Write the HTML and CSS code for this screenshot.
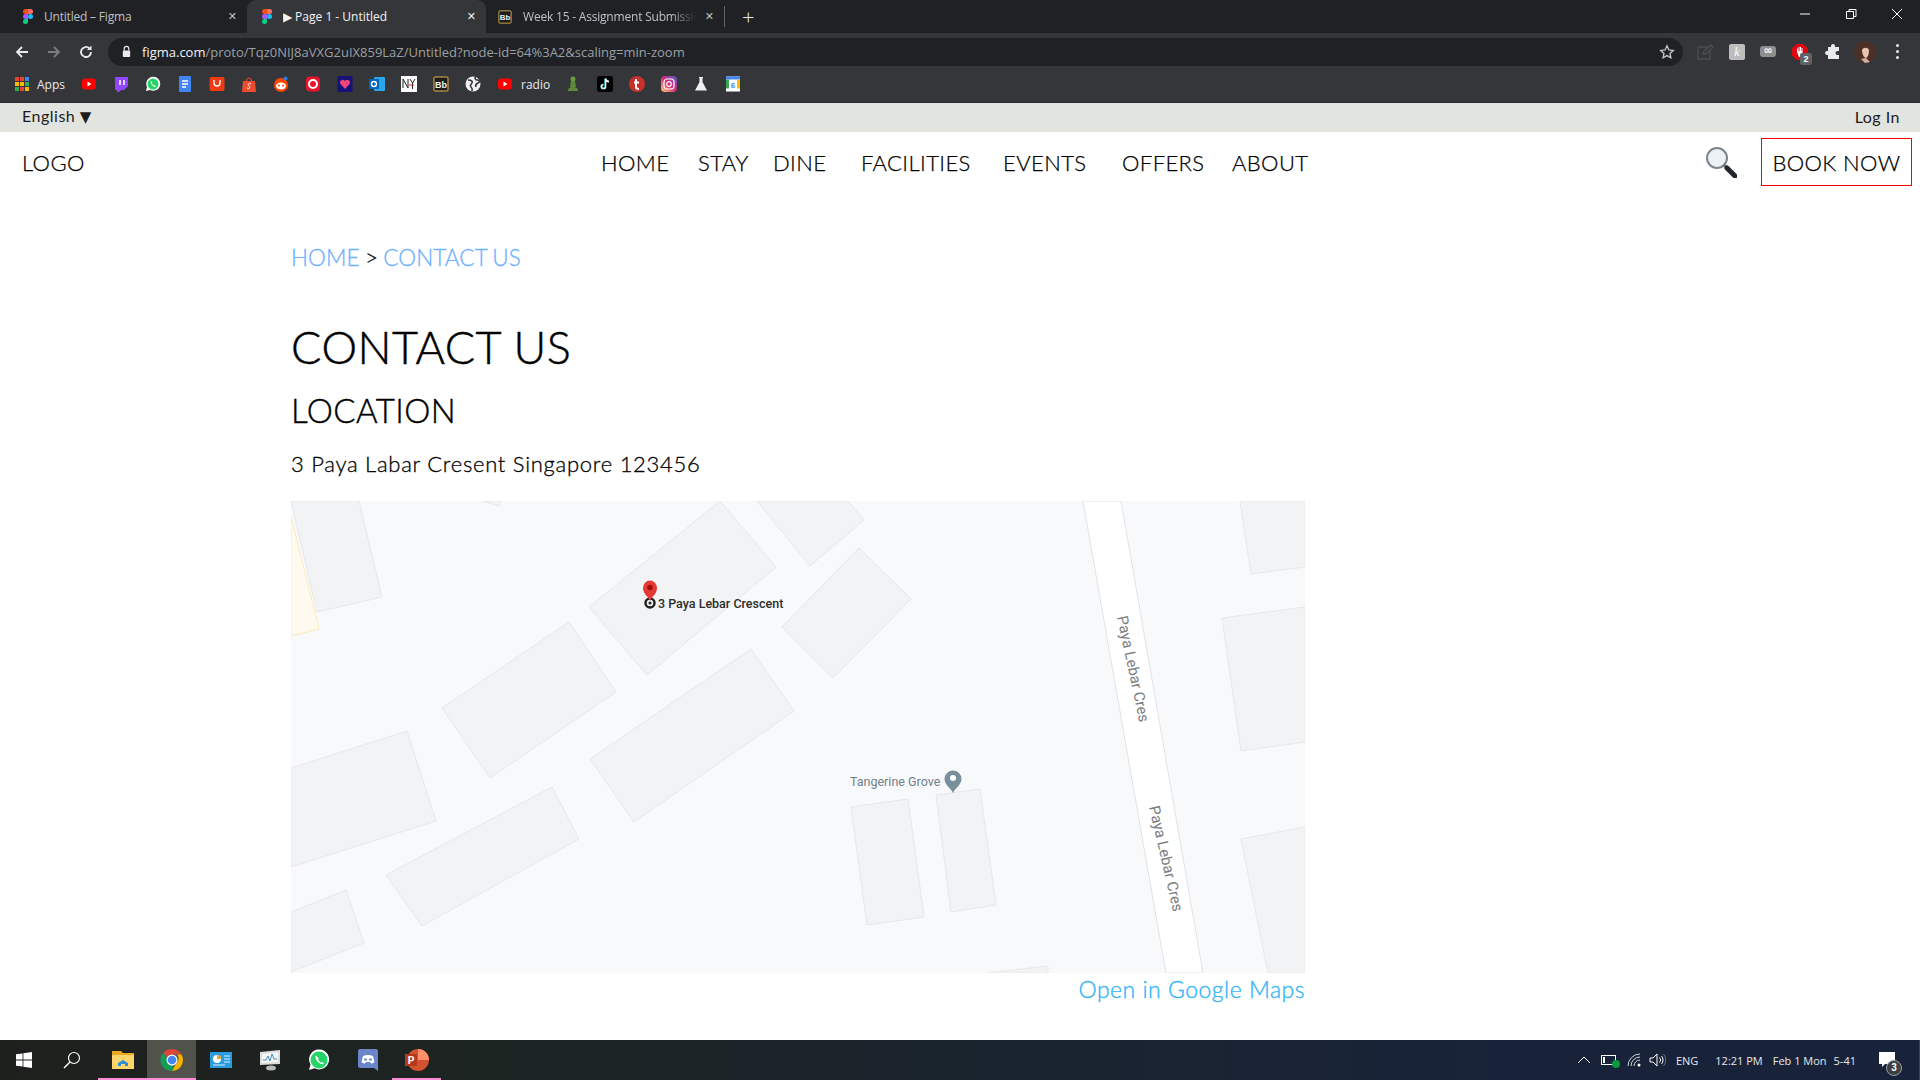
FILE: index.html
```html
<!DOCTYPE html>
<html lang="en">

<head>
  <meta charset="UTF-8">
  <title>Page 1 - Untitled</title>
  <link rel="stylesheet" href="styles.css">
</head>

<body>
  <svg class="defs" width="0" height="0">
    <symbol id="figma" viewBox="0 0 12 18">
      <path d="M3 0h3v6H3a3 3 0 0 1 0-6z" fill="#f24e1e"/>
      <path d="M6 0h3a3 3 0 0 1 0 6H6z" fill="#ff7262"/>
      <path d="M3 6h3v6H3a3 3 0 0 1 0-6z" fill="#a259ff"/>
      <circle cx="9" cy="9" r="3" fill="#1abcfe"/>
      <path d="M3 12h3v3a3 3 0 1 1-3-3z" fill="#0acf83"/>
    </symbol>
    <symbol id="yt" viewBox="0 0 16 16">
      <rect x="1" y="2.5" width="14" height="11" rx="3" fill="#f00"/>
      <path d="M6.5 5.5v5l4-2.500z" fill="#fff"/>
    </symbol>
    <symbol id="bb" viewBox="0 0 16 16">
      <rect x="1" y="1" width="14" height="14" rx="1" fill="#1c1c1c" stroke="#e0b84a"/>
      <text x="8" y="11.500" text-anchor="middle" class="bb-text">Bb</text>
    </symbol>
  </svg>

  <header class="browser">
    <div class="tabs">
      <div class="tab">
        <svg class="tab-icon"><use href="#figma"/></svg>
        <span class="tab-title">Untitled – Figma</span>
        <span class="tab-close">✕</span>
      </div>
      <div class="tab tab-active">
        <svg class="tab-icon"><use href="#figma"/></svg>
        <span class="tab-title">▶ Page 1 - Untitled</span>
        <span class="tab-close">✕</span>
      </div>
      <div class="tab tab-last">
        <svg class="tab-icon"><use href="#bb"/></svg>
        <span class="tab-title tab-fade">Week 15 - Assignment Submission</span>
        <span class="tab-close">✕</span>
      </div>
      <span class="new-tab">+</span>
      <div class="win-controls">
        <svg width="16" height="16" viewBox="0 0 16 16"><path d="M3 8h10" stroke="#fff" fill="none"/></svg>
        <svg width="16" height="16" viewBox="0 0 16 16"><path d="M3.500 5.500h7v7h-7zM6 5.500V3.500h7v7h-2.500" stroke="#fff" fill="none"/></svg>
        <svg width="16" height="16" viewBox="0 0 16 16"><path d="M3 3l10 10M13 3L3 13" stroke="#fff" fill="none"/></svg>
      </div>
    </div>

    <div class="toolbar">
      <svg class="tool-btn" viewBox="0 0 16 16"><path d="M14 8H3M8 3L3 8l5 5" stroke="#e8eaed" stroke-width="1.800" fill="none"/></svg>
      <svg class="tool-btn" viewBox="0 0 16 16"><path d="M2 8h11M8 3l5 5-5 5" stroke="#7b7d80" stroke-width="1.800" fill="none"/></svg>
      <svg class="tool-btn" viewBox="0 0 16 16"><path d="M13 8a5 5 0 1 1-1.500-3.600" stroke="#e8eaed" stroke-width="1.800" fill="none"/><path d="M13.500 1.500v4.500H9z" fill="#e8eaed"/></svg>
      <div class="address">
        <svg class="lock" viewBox="0 0 12 14"><path d="M3.500 6V4a2.500 2.500 0 0 1 5 0v2" stroke="#e8eaed" stroke-width="1.300" fill="none"/><rect x="2" y="6" width="8" height="7" rx="1" fill="#e8eaed"/></svg>
        <span class="url"><span class="url-host">figma.com</span>/proto/Tqz0NIJ8aVXG2uIX859LaZ/Untitled?node-id=64%3A2&amp;scaling=min-zoom</span>
        <svg class="star" viewBox="0 0 16 16"><path d="M8 1.800l1.900 4.100 4.400.5-3.300 3 .9 4.400L8 11.600l-3.900 2.200.9-4.400-3.300-3 4.400-.5z" stroke="#c8cacc" stroke-width="1.300" fill="none"/></svg>
      </div>
      <div class="extensions">
        <svg class="ext" viewBox="0 0 18 18"><path d="M12 4H2v12h12V7M7 11l1-3 7-6 2 2-7 7z" stroke="#4c4d50" stroke-width="1.300" fill="none"/></svg>
        <span class="ext-k">k</span>
        <span class="ext-inf">∞</span>
        <span class="ext-stop">
          <svg class="ext" viewBox="0 0 18 18"><path d="M5.500 1h7L17 5.500v7L12.500 17h-7L1 12.500v-7z" fill="#e0060f"/><path d="M6 9V5.500h1V8h.5V4h1v4H9V4h1v4h.5V5h1v6l-2 3H8z" fill="#fff"/></svg>
          <span class="ext-badge">2</span>
        </span>
        <svg class="ext" viewBox="0 0 18 18"><path d="M7 3a2 2 0 0 1 4 0v1h4v4h-1.500a2 2 0 0 0 0 4H15v4H4v-4H3a2 2 0 0 1 0-4h1V4h3z" fill="#e8eaed"/></svg>
        <svg class="avatar" viewBox="0 0 22 22">
          <circle cx="11" cy="11" r="11" fill="#4a3027"/>
          <path d="M8 9c1-3 6-3 7 0 0 4-1 7-3 8-2 0-4-4-4-8z" fill="#e8c4ae"/>
          <path d="M7 18l5-1 4 4-5 1z" fill="#d8b09a"/>
        </svg>
        <span class="dots"><i></i><i></i><i></i></span>
      </div>
    </div>

    <div class="bookmarks">
      <svg class="mark" viewBox="0 0 16 16">
        <g fill="#ea4335"><rect x="1" y="1" width="4" height="4"/><rect x="6" y="1" width="4" height="4"/></g>
        <rect x="11" y="1" width="4" height="4" fill="#4285f4"/>
        <g fill="#fbbc05"><rect x="1" y="6" width="4" height="4"/><rect x="6" y="6" width="4" height="4"/></g>
        <rect x="11" y="6" width="4" height="4" fill="#34a853"/>
        <g fill="#34a853"><rect x="1" y="11" width="4" height="4"/></g>
        <rect x="6" y="11" width="4" height="4" fill="#ea4335"/>
        <rect x="11" y="11" width="4" height="4" fill="#fbbc05"/>
      </svg>
      <span class="mark-label mark-apps">Apps</span>
      <svg class="mark"><use href="#yt"/></svg>
      <svg class="mark" viewBox="0 0 16 16"><path d="M2 1h13v9l-4 4H8l-2 2H4v-2H2z" fill="#9146ff"/><path d="M7 4v5M11 4v5" stroke="#fff" stroke-width="1.500"/></svg>
      <svg class="mark" viewBox="0 0 16 16"><path d="M1 15l1-4a7 7 0 1 1 3 3z" fill="#fff"/><circle cx="8" cy="8" r="5.500" fill="#25d366"/><path d="M6 5c-1 1 0 3 1.500 4.500S10 11.500 11 10.500L9.800 9.300l-.8.500L6.800 7.500l.5-.8z" fill="#fff"/></svg>
      <svg class="mark" viewBox="0 0 16 16"><rect x="2" y="0" width="12" height="16" rx="1" fill="#4285f4"/><path d="M5 5h6M5 8h6M5 11h4" stroke="#fff" stroke-width="1.400"/></svg>
      <svg class="mark" viewBox="0 0 16 16"><rect x="0.500" y="1" width="15" height="14" rx="2" fill="#ef3a12"/><path d="M5 4v3a3 3 0 0 0 6 0V4" stroke="#fff" stroke-width="1.400" fill="none"/></svg>
      <svg class="mark" viewBox="0 0 16 16"><path d="M2 5h12l1 11H1z" fill="#ee4d2d"/><path d="M5.500 5a2.500 3 0 0 1 5 0" stroke="#ee4d2d" fill="none"/><path d="M10 8c-2-1-4 0-2 2s0 3-2 2" stroke="#fff" fill="none"/></svg>
      <svg class="mark" viewBox="0 0 16 16"><circle cx="8" cy="9" r="7" fill="#ff4500"/><ellipse cx="8" cy="10" rx="5" ry="3.500" fill="#fff"/><circle cx="6" cy="9.500" r="1" fill="#ff4500"/><circle cx="10" cy="9.500" r="1" fill="#ff4500"/><circle cx="12.500" cy="2.500" r="2" fill="#2a7de1"/></svg>
      <svg class="mark" viewBox="0 0 16 16"><rect x="1" y="0.500" width="14" height="15" rx="4" fill="#e8152c"/><circle cx="8" cy="8" r="4" fill="none" stroke="#fff" stroke-width="2"/></svg>
      <svg class="mark" viewBox="0 0 16 16"><rect x="0.500" y="0" width="15" height="16" fill="#14137a"/><path d="M8 13L3.500 8a2.600 2.600 0 0 1 4.500-3 2.600 2.600 0 0 1 4.500 3z" fill="#f2447c"/></svg>
      <svg class="mark" viewBox="0 0 16 16"><rect x="5" y="1" width="11" height="14" rx="1" fill="#28a8ea"/><rect x="0" y="3" width="10" height="10" fill="#0364b8"/><circle cx="5" cy="8" r="2.500" fill="none" stroke="#fff" stroke-width="1.400"/></svg>
      <svg class="mark" viewBox="0 0 16 16"><rect width="16" height="16" fill="#fff"/><path d="M2 3v9M2 3l5 9V3M9 3l2.500 4L14 3M11.500 7v6" stroke="#222" fill="none"/><path d="M8 9h5" stroke="#d22"/></svg>
      <svg class="mark"><use href="#bb"/></svg>
      <svg class="mark" viewBox="0 0 16 16"><circle cx="8" cy="8" r="7.500" fill="#f1f1f1"/><path d="M3 4c3 0 5 1 4 3S4 9 6 11s1 3 1 4M10 1c0 3 1 3 3 3s2 2 0 3-3 2-2 4" stroke="#35363a" stroke-width="1.600" fill="none"/></svg>
      <svg class="mark"><use href="#yt"/></svg>
      <span class="mark-label mark-radio">radio</span>
      <svg class="mark" viewBox="0 0 16 16"><circle cx="8" cy="3" r="2.500" fill="#6f9b3f"/><path d="M6 5h4l1 6H5zM3 15c0-3 2-4 5-4s5 1 5 4z" fill="#5c8a38"/></svg>
      <svg class="mark" viewBox="0 0 16 16"><rect width="16" height="16" rx="3" fill="#000"/><path d="M8.500 2.500v8a2 2 0 1 1-2-2M8.500 2.500c.3 2 1.500 3 3.500 3.200" stroke="#fff" stroke-width="1.700" fill="none"/><path d="M7.800 2.500v8a2 2 0 1 1-2-2" stroke="#25f4ee" stroke-width=".6" fill="none"/></svg>
      <svg class="mark" viewBox="0 0 16 16"><circle cx="8" cy="8" r="8" fill="#c9302c"/><path d="M7 3v8q0 2 3 2M5 6.500h5" stroke="#fff" stroke-width="2" fill="none"/></svg>
      <svg class="mark" viewBox="0 0 16 16"><defs><linearGradient id="insta" x1="0" y1="1" x2="1" y2="0"><stop offset="0" stop-color="#feda75"/><stop offset=".5" stop-color="#d62976"/><stop offset="1" stop-color="#4f5bd5"/></linearGradient></defs><rect width="16" height="16" rx="4" fill="url(#insta)"/><rect x="3" y="3" width="10" height="10" rx="3" fill="none" stroke="#fff" stroke-width="1.200"/><circle cx="8" cy="8" r="2.300" fill="none" stroke="#fff" stroke-width="1.200"/></svg>
      <svg class="mark" viewBox="0 0 16 16"><path d="M6 1h4v1H9.500v4l4.500 8.500H2L6.500 6V2H6z" fill="#f1f1f1"/></svg>
      <svg class="mark" viewBox="0 0 16 16"><rect x="1" y="0.500" width="14" height="15" fill="#fff"/><path d="M1 0.500h14v3H1z" fill="#4285f4"/><path d="M1 3.500h3v9H1z" fill="#34a853"/><path d="M12 3.500h3v9h-3z" fill="#fbbc05"/><text x="8" y="11.500" text-anchor="middle" class="cal-text">6</text></svg>
    </div>
  </header>

  <div class="page">
    <div class="top-bar">
      <span>English <span class="caret">▼</span></span>
      <span>Log In</span>
    </div>

    <div class="site-nav">
      <span class="logo">LOGO</span>
      <nav class="menu">
        <a>HOME</a>
        <a>STAY</a>
        <a>DINE</a>
        <a>FACILITIES</a>
        <a>EVENTS</a>
        <a>OFFERS</a>
        <a>ABOUT</a>
      </nav>
      <svg class="search" viewBox="0 0 32 32">
        <circle cx="12" cy="12" r="10" fill="#eef1f4" stroke="#7d858c" stroke-width="2"/>
        <path d="M19 19l3 3" stroke="#6b7075" stroke-width="3"/>
        <path d="M22 22l8 8" stroke="#22262a" stroke-width="5" stroke-linecap="round"/>
      </svg>
      <a class="book-btn">BOOK NOW</a>
    </div>

    <main class="content">
      <p class="crumbs"><a>HOME</a> &gt; <a>CONTACT US</a></p>
      <h1>CONTACT US</h1>
      <h2>LOCATION</h2>
      <p class="address-line">3 Paya Labar Cresent Singapore 123456</p>

      <svg class="map" viewBox="0 0 1014 472">
        <rect width="1014" height="472" fill="#f8f9fa"/>
        <polygon class="park" points="0,16 28,128 0,135"/>
        <g class="blocks">
          <polygon points="0,0 68,0 91,96 26,111"/>
          <polygon points="191,0 208,5 210,0"/>
          <polygon points="429,0 485,66 356,174 298,106"/>
          <polygon points="466,0 557,0 573,19 519,65"/>
          <polygon points="568,47 620,98 542,177 491,126"/>
          <polygon points="278,121 325,191 199,277 151,207"/>
          <polygon points="460,148 503,210 343,321 299,258"/>
          <polygon points="116,230 145,320 0,366 0,267"/>
          <polygon points="261,286 288,338 131,425 95,374"/>
          <polygon points="0,411 55,389 73,442 0,471"/>
          <polygon points="560,306 617,298 633,416 576,424"/>
          <polygon points="645,294 689,288 705,404 660,411"/>
          <polygon points="696,472 757,465 757,472"/>
          <polygon points="949,0 960,73 1014,66 1014,0"/>
          <polygon points="931,117 1014,106 1014,241 950,250"/>
          <polygon points="950,338 1014,326 1014,472 977,472"/>
        </g>
        <polygon class="road" points="792,0 830,0 912,472 875,472"/>
        <text class="road-label" transform="translate(826 116) rotate(78)">Paya Lebar Cres</text>
        <text class="road-label" transform="translate(858 306) rotate(77)">Paya Lebar Cres</text>

        <circle cx="359" cy="102" r="4.500" fill="none" stroke="#222" stroke-width="2.500"/>
        <circle cx="359" cy="102" r="1.500" fill="#222"/>
        <path d="M359 100c-2-5-7-7-7-13a7 7.500 0 0 1 14 0c0 6-5 8-7 13z" fill="#e53935"/>
        <circle cx="359" cy="86.500" r="2.800" fill="#a50e0e"/>
        <text class="place-main" x="367" y="107">3 Paya Lebar Crescent</text>

        <path d="M662 292c-2-5-8.500-8-8.500-14a8.500 8.500 0 0 1 17 0c0 6-6.500 9-8.500 14z" fill="#78909c"/>
        <circle cx="662" cy="277" r="3" fill="#fff"/>
        <text class="place-sub" x="559" y="285">Tangerine Grove</text>
      </svg>

      <a class="maps-link">Open in Google Maps</a>
    </main>
  </div>

  <footer class="taskbar">
    <div class="task task-first">
      <svg width="16" height="16" viewBox="0 0 16 16"><path d="M0 2.300l6.600-.9v6.200H0zM7.400 1.300L16 0v7.600H7.400zM0 8.400h6.600v6.200L0 13.700zM7.400 8.400H16V16l-8.600-1.200z" fill="#fff"/></svg>
    </div>
    <div class="task task-first">
      <svg width="18" height="18" viewBox="0 0 18 18"><circle cx="11" cy="7" r="5.500" fill="none" stroke="#fff" stroke-width="1.200"/><path d="M7 11l-6 6" stroke="#fff" stroke-width="1.400"/></svg>
    </div>
    <div class="task task-open">
      <svg width="22" height="20" viewBox="0 0 22 20"><path d="M0 1h9l2 2h11v15H0z" fill="#e8a820"/><path d="M0 5h22v14H0z" fill="#fcd66b"/><path d="M6 16v-3l5-3 5 3v3h-3v-2H9v2z" fill="#2a8fd8"/></svg>
    </div>
    <div class="task task-open task-active">
      <svg width="24" height="24" viewBox="0 0 24 24">
        <path d="M12 1a11 11 0 0 1 9.500 5.500H12a5.500 5.500 0 0 0-5 3.300L3.500 4.500A11 11 0 0 1 12 1z" fill="#db4437"/>
        <path d="M21.500 6.500A11 11 0 0 1 12 23l4.500-8a5.500 5.500 0 0 0 .3-8.500z" fill="#f4b400"/>
        <path d="M3.500 4.500L8 12.500a5.500 5.500 0 0 0 6 4.500L12 23A11 11 0 0 1 3.500 4.500z" fill="#0f9d58"/>
        <circle cx="12" cy="12" r="5.500" fill="#fff"/>
        <circle cx="12" cy="12" r="4.300" fill="#4285f4"/>
      </svg>
    </div>
    <div class="task">
      <svg width="22" height="16" viewBox="0 0 22 16"><rect width="22" height="16" fill="#2b9be0"/><circle cx="7" cy="7" r="4" fill="#fff"/><path d="M7 7V3a4 4 0 0 1 4 4z" fill="#f4a020"/><path d="M14 4h6M14 7h6M14 10h6M3 13h12" stroke="#dff1ff"/></svg>
    </div>
    <div class="task">
      <svg width="24" height="22" viewBox="0 0 24 22"><path d="M2 3l20-2v14L2 16z" fill="#d9dbdc"/><path d="M4 5l16-2v10L4 14z" fill="#f2f4f5"/><path d="M5 11l3 0 2-4 2 5 2-7 2 5 3 0" stroke="#4a8fb8" fill="none"/><ellipse cx="13" cy="19" rx="5" ry="2.500" fill="#b9bbbc"/></svg>
    </div>
    <div class="task">
      <svg width="22" height="22" viewBox="0 0 22 22"><path d="M1 21l1.500-5.500a10 10 0 1 1 4 3.800z" fill="#fff"/><circle cx="11" cy="11" r="8.500" fill="#25d366"/><path d="M8 6.500c-1.500 1.500 0 4.500 2 6.500s5 3 6 1.500L14.200 13l-1.200.8-3-3 .8-1.200z" fill="#fff"/></svg>
    </div>
    <div class="task">
      <svg width="20" height="22" viewBox="0 0 20 22"><path d="M2 0h16a2 2 0 0 1 2 2v20l-4-3H2a2 2 0 0 1-2-2V2a2 2 0 0 1 2-2z" fill="#6a85c9"/><path d="M5 7c3-1.500 7-1.500 10 0l1.500 6c-1 1-2.500 1.500-3.500 1.500L12 13H8l-1 1.500C6 14.500 4.500 14 3.500 13z" fill="#fff"/><circle cx="7.500" cy="10.500" r="1.300" fill="#6a85c9"/><circle cx="12.500" cy="10.500" r="1.300" fill="#6a85c9"/></svg>
    </div>
    <div class="task task-open">
      <svg width="24" height="22" viewBox="0 0 24 22"><circle cx="13" cy="11" r="11" fill="#d35230"/><path d="M13 0a11 11 0 0 1 11 11H13z" fill="#ff8f6b"/><rect x="0" y="5" width="12" height="12" fill="#b7381c"/><text x="6" y="15" text-anchor="middle" class="ppt-text">P</text></svg>
    </div>

    <div class="tray">
      <svg width="12" height="8" viewBox="0 0 12 8"><path d="M0 7l6-6 6 6" stroke="#fff" fill="none"/></svg>
      <span class="tray-batt">
        <svg width="16" height="10" viewBox="0 0 16 10"><rect x=".5" y=".5" width="14" height="9" fill="none" stroke="#fff"/><rect x="2" y="2" width="2" height="6" fill="#fff"/></svg>
        <i class="tray-dot"></i>
      </span>
      <svg width="14" height="14" viewBox="0 0 14 14"><g stroke="#cfd3d8" fill="none"><path d="M1 13A12 12 0 0 1 13 1"/><path d="M4 13a9 9 0 0 1 9-9"/><path d="M7 13a6 6 0 0 1 6-6"/></g><circle cx="12" cy="12" r="1.500" fill="#fff"/></svg>
      <svg width="17" height="14" viewBox="0 0 17 14"><path d="M1 5h3l4-4v12l-4-4H1z" stroke="#fff" fill="none"/><path d="M10.500 4.500a3.500 3.500 0 0 1 0 5M12.500 3a6 6 0 0 1 0 8" stroke="#fff" fill="none"/><path d="M14.500 1a9 9 0 0 1 0 12" stroke="#6b7280" fill="none"/></svg>
      <span class="tray-lang">ENG</span>
      <span class="tray-time">12:21 PM</span>
      <span class="tray-date">Feb 1 Mon</span>
      <span class="tray-code">5-41</span>
      <span class="tray-notes">
        <svg width="16" height="16" viewBox="0 0 16 16"><path d="M0 0h16v12H6l-3 3v-3H0z" fill="#fff"/></svg>
        <span class="tray-count">3</span>
      </span>
    </div>
  </footer>
</body>

</html>
```

FILE: styles.css
```css
/* Global Styles */
* {
  box-sizing: border-box;
}

html,
body {
  margin: 0;
  height: 1080px;
  overflow: hidden;
}

body {
  display: flex;
  flex-direction: column;
  font-family: 'Lato', sans-serif;
  background: #ffffff;
  color: #000;
}

.defs {
  position: absolute;
}

/* Browser Frame */
.browser {
  height: 103px;
  flex: none;
  background: #35363a;
  border-bottom: 1px solid #2a2b2e;
  font-family: 'Open Sans', sans-serif;
  color: #e8eaed;
}

.bb-text {
  font: bold 9px 'Liberation Sans', sans-serif;
  fill: #f2f2f2;
}

.cal-text {
  font: bold 8px 'Liberation Sans', sans-serif;
  fill: #4285f4;
}

.tabs {
  height: 33px;
  display: flex;
  align-items: flex-end;
  background: #202124;
  padding-left: 8px;
  font-size: 12px;
}

.tab {
  width: 239px;
  height: 33px;
  display: flex;
  align-items: center;
  padding: 0 10px 0 15px;
  color: #bdc1c6;
}

.tab-active {
  background: #35363a;
  border-radius: 9px 9px 0 0;
  color: #f1f3f4;
}

.tab-last {
  border-right: 1px solid #5f6368;
  height: 21px;
  margin-bottom: 6px;
  padding-left: 12px;
}

.tab-icon {
  width: 10px;
  height: 15px;
  flex: none;
}

.tab-last .tab-icon {
  width: 14px;
  height: 14px;
}

.tab-title {
  margin-left: 11px;
  flex: 1;
  white-space: nowrap;
  overflow: hidden;
  letter-spacing: -.2px;
}

.tab-active .tab-title {
  letter-spacing: 0;
}

.tab-fade {
  -webkit-mask-image: linear-gradient(90deg, #000 85%, transparent);
  mask-image: linear-gradient(90deg, #000 85%, transparent);
}

.tab-close {
  margin-left: 8px;
  font-size: 11px;
  font-family: 'DejaVu Sans', sans-serif;
}

.new-tab {
  margin: 0 0 3px 17px;
  height: 26px;
  font-size: 22px;
  line-height: 24px;
  color: #e8eaed;
  font-weight: 300;
}

.win-controls {
  margin-left: auto;
  height: 28px;
  align-self: flex-start;
  display: flex;
  align-items: center;
  gap: 30px;
  padding-right: 15px;
}

.toolbar {
  height: 37px;
  display: flex;
  align-items: center;
  padding-left: 14px;
}

.tool-btn {
  width: 16px;
  height: 16px;
  margin-right: 16px;
  flex: none;
}

.address {
  width: 1575px;
  height: 28px;
  margin-left: -2px;
  display: flex;
  align-items: center;
  background: #202124;
  border-radius: 14px;
  padding: 0 8px 0 13px;
  font-size: 13px;
  color: #9aa0a6;
}

.lock {
  width: 11px;
  height: 13px;
  flex: none;
}

.url {
  margin-left: 10px;
  flex: 1;
  white-space: nowrap;
}

.url-host {
  color: #f1f3f4;
}

.star {
  width: 16px;
  height: 16px;
}

.extensions {
  flex: 1;
  display: flex;
  align-items: center;
  padding-left: 13px;
  gap: 15px;
}

.ext {
  width: 18px;
  height: 18px;
  display: block;
  flex: none;
}

.ext-k {
  width: 16px;
  height: 16px;
  border-radius: 2px;
  background: #bdbdbd;
  color: #fff;
  font: italic 12px/16px 'Liberation Serif', serif;
  text-align: center;
}

.ext-inf {
  width: 16px;
  height: 11px;
  border-radius: 3px;
  background: #8f8f8f;
  color: #fff;
  font: bold 11px/10px 'DejaVu Sans', sans-serif;
  text-align: center;
}

.ext-stop {
  position: relative;
}

.ext-badge {
  position: absolute;
  left: 9px;
  top: 10px;
  width: 12px;
  height: 12px;
  border-radius: 2px;
  background: #5f6368;
  color: #fff;
  font: bold 9px/12px 'Liberation Sans', sans-serif;
  text-align: center;
}

.avatar {
  width: 22px;
  height: 22px;
  flex: none;
  margin-left: -3px;
}

.dots {
  margin-left: 5px;
  display: flex;
  flex-direction: column;
  gap: 3px;
}

.dots i {
  width: 3px;
  height: 3px;
  border-radius: 50%;
  background: #e8eaed;
}

.bookmarks {
  height: 32px;
  display: flex;
  align-items: center;
  padding: 0 0 4px 14px;
  gap: 16px;
  font-size: 12px;
}

.mark {
  width: 16px;
  height: 16px;
  flex: none;
}

.mark-label {
  color: #e8eaed;
}

.mark-apps {
  margin-left: -9px;
  width: 28px;
  white-space: nowrap;
}

.mark-radio {
  margin-left: -8px;
  width: 28px;
}

.ppt-text {
  font: bold 10px 'Liberation Sans', sans-serif;
  fill: #fff;
}

/* Page Area */
.page {
  flex: 1;
  min-height: 0;
}

.top-bar {
  height: 29px;
  display: flex;
  justify-content: space-between;
  align-items: center;
  background: #e2e4df;
  padding: 0 20px 3px 22px;
  font-size: 16px;
  letter-spacing: .5px;
  color: #1c1c1c;
}

.caret {
  font-family: 'DejaVu Sans', sans-serif;
  font-size: 15px;
}

.site-nav {
  height: 58px;
  display: flex;
  align-items: center;
  padding: 2px 8px 0 22px;
  font-size: 22px;
  font-weight: 300;
  letter-spacing: .4px;
  -webkit-text-stroke: .25px #000;
}

.logo {
  width: 579px;
}

.menu {
  display: grid;
  grid-template-columns: 97px 75px 88px 142px 119px 110px 75px;
  width: 706px;
}

.menu a {
  white-space: nowrap;
}

.search {
  width: 32px;
  height: 32px;
  margin-left: 398px;
}

.book-btn {
  margin-left: 24px;
  width: 151px;
  height: 48px;
  border: 1px solid #f00;
  display: flex;
  align-items: center;
  justify-content: center;
}

.content {
  width: 1014px;
  margin-left: 291px;
}

.crumbs {
  margin: 53px 0 0;
  font-size: 22.5px;
  line-height: 30px;
  font-weight: 300;
  letter-spacing: .1px;
  word-spacing: -1px;
  -webkit-text-stroke: .3px;
}

.crumbs a {
  color: #6eb1ff;
}

h1 {
  margin: 48px 0 0;
  font-size: 45px;
  line-height: 52px;
  font-weight: 300;
  letter-spacing: .5px;
  -webkit-text-stroke: .5px #000;
}

h2 {
  margin: 17px 0 0;
  font-size: 33px;
  line-height: 40px;
  font-weight: 300;
  letter-spacing: .4px;
  -webkit-text-stroke: .4px #000;
}

.address-line {
  margin: 20px 0 0;
  font-size: 22px;
  line-height: 28px;
  font-weight: 300;
  letter-spacing: .73px;
  -webkit-text-stroke: .3px #000;
}

/* Map */
.map {
  display: block;
  width: 1014px;
  height: 472px;
  margin-top: 23px;
}

.blocks polygon {
  fill: #f1f3f4;
  stroke: #e6e7e9;
}

.park {
  fill: #fffaf0;
  stroke: #ffe9b8;
}

.road {
  fill: #ffffff;
  stroke: #e0e2e5;
}

.road-label {
  font: 15px 'Roboto', sans-serif;
  fill: #7a7d80;
}

.place-main {
  font: 500 12.500px 'Roboto', sans-serif;
  fill: #2c2c2c;
}

.place-sub {
  font: 12.500px 'Roboto', sans-serif;
  fill: #70808c;
}

.maps-link {
  display: block;
  margin-top: 2px;
  text-align: right;
  font-size: 23px;
  line-height: 28px;
  font-weight: 300;
  letter-spacing: .5px;
  -webkit-text-stroke: .35px;
  color: #33b5f5;
}

/* Taskbar */
.taskbar {
  height: 40px;
  flex: none;
  display: flex;
  background: linear-gradient(90deg, #1e201d 0%, #1c2422 25%, #18233a 80%);
  font-family: 'Open Sans', sans-serif;
  font-size: 11px;
  color: #e6e8ea;
}

.task {
  width: 49px;
  height: 40px;
  display: flex;
  align-items: center;
  justify-content: center;
  flex: none;
}

.task-first {
  width: 48px;
}

.task-first + .task:not(.task-first) {
  margin-left: 2px;
}

.task-open {
  border-bottom: 2px solid #ff8ad8;
  padding-top: 2px;
}

.task-active {
  background: #51524c;
}

.tray {
  margin-left: auto;
  display: flex;
  align-items: center;
  padding-right: 4px;
  border-right: 1px solid #3a4458;
}

.tray-batt {
  position: relative;
  display: flex;
  margin: 0 0 0 11px;
}

.tray-dot {
  position: absolute;
  right: -3px;
  bottom: -3px;
  width: 8px;
  height: 8px;
  border-radius: 50%;
  background: #0a9a3c;
}

.tray-batt + svg {
  margin-left: 10px;
}

.tray-batt + svg + svg {
  margin-left: 8px;
}

.tray-lang {
  margin-left: 10px;
}

.tray-time {
  margin-left: 17px;
  white-space: nowrap;
}

.tray-date {
  margin-left: 10px;
  white-space: nowrap;
}

.tray-code {
  margin-left: 7px;
}

.tray-notes {
  position: relative;
  display: flex;
  margin: 0 20px 0 23px;
}

.tray-count {
  position: absolute;
  left: 7px;
  top: 8px;
  width: 16px;
  height: 16px;
  border-radius: 50%;
  background: #3c4043;
  border: 1px solid #9aa0a6;
  color: #fff;
  font: bold 10px/14px 'Liberation Sans', sans-serif;
  text-align: center;
}
```
